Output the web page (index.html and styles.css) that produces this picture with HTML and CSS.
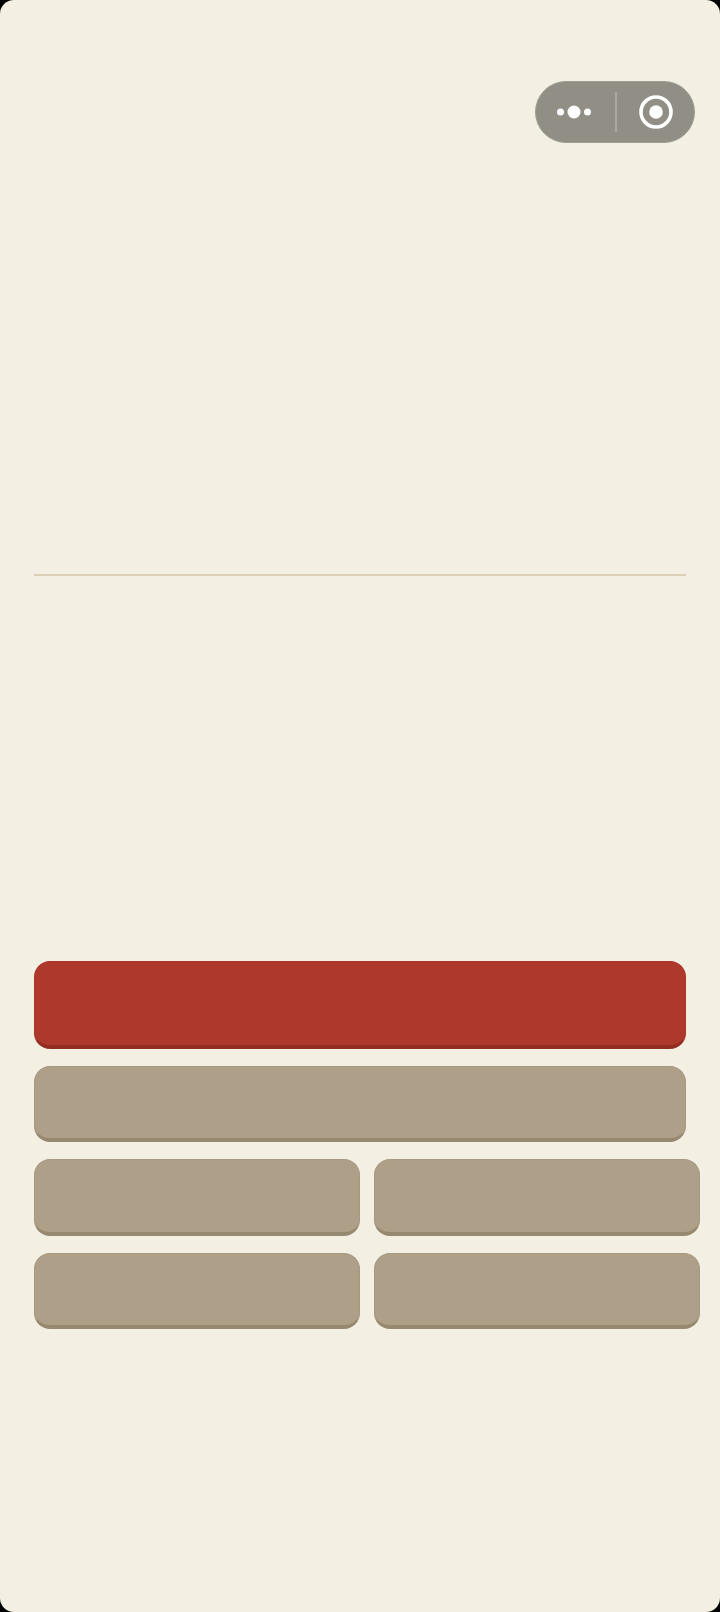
FILE: index.html
```html
<!DOCTYPE html>
<html lang="en">
<head>
    <meta charset="UTF-8">
    <meta name="viewport" content="width=device-width, initial-scale=1.0">
    <title>Mini program</title>
    <link rel="stylesheet" href="styles.css">
</head>
<body>
    <div class="page">
        <div class="top-bar">
            <div class="capsule">
                <button class="capsule-btn capsule-more" aria-label="More">
                    <svg width="36" height="16" viewBox="0 0 36 16">
                        <circle cx="4.5" cy="8" r="3.5" fill="#fff"/>
                        <circle cx="18" cy="8" r="6.5" fill="#fff"/>
                        <circle cx="31.5" cy="8" r="3.5" fill="#fff"/>
                    </svg>
                </button>
                <div class="capsule-line"></div>
                <button class="capsule-btn capsule-close" aria-label="Close">
                    <svg width="36" height="36" viewBox="0 0 36 36">
                        <circle cx="18" cy="18" r="15" fill="none" stroke="#fff" stroke-width="3.6"/>
                        <circle cx="18" cy="18" r="6.8" fill="#fff"/>
                    </svg>
                </button>
            </div>
        </div>

        <hr class="divider">

        <div class="actions">
            <button class="btn btn-red"></button>
            <button class="btn btn-tan"></button>
            <div class="btn-row">
                <button class="btn btn-tan"></button>
                <button class="btn btn-tan"></button>
            </div>
            <div class="btn-row">
                <button class="btn btn-tan"></button>
                <button class="btn btn-tan"></button>
            </div>
        </div>
    </div>
</body>
</html>
```

FILE: styles.css
```css
html, body {
    margin: 0;
    padding: 0;
    background-color: #000;
}

.page {
    box-sizing: border-box;
    width: 720px;
    height: 1612px;
    padding: 81px 34px 0;
    background-color: #f4efe3;
    border-radius: 14px;
    overflow: hidden;
}

.top-bar {
    display: flex;
    justify-content: flex-end;
    margin-right: -9px;
}

.capsule {
    box-sizing: border-box;
    display: flex;
    align-items: center;
    width: 160px;
    height: 62px;
    background-color: #918e85;
    border: 1px solid #a09d93;
    border-radius: 31px;
}

.capsule-btn {
    flex: 1;
    display: flex;
    align-items: center;
    justify-content: center;
    padding: 0;
    border: none;
    background: none;
}

.capsule-more {
    padding-right: 2px;
}

.capsule-close {
    padding-left: 1px;
}

.capsule-line {
    width: 2px;
    height: 40px;
    background-color: #aaa79e;
}

.divider {
    height: 2px;
    margin: 431px 0 0;
    border: none;
    background-color: #ddd0b8;
}

.actions {
    display: flex;
    flex-direction: column;
    margin-top: 385px;
    gap: 17px;
}

.btn {
    box-sizing: border-box;
    display: block;
    width: 100%;
    height: 76px;
    padding: 0;
    border: 1px solid #a69980;
    border-bottom-width: 4px;
    border-radius: 16px;
}

.btn-red {
    height: 88px;
    background-color: #ae382c;
    border-color: #a93629;
    border-bottom-color: #912d23;
}

.btn-tan {
    background-color: #aea088;
    border-bottom-color: #97896f;
}

.btn-row {
    display: flex;
    gap: 14px;
    width: 666px;
}

.btn-row .btn {
    width: 326px;
    height: 76.5px;
}
```
